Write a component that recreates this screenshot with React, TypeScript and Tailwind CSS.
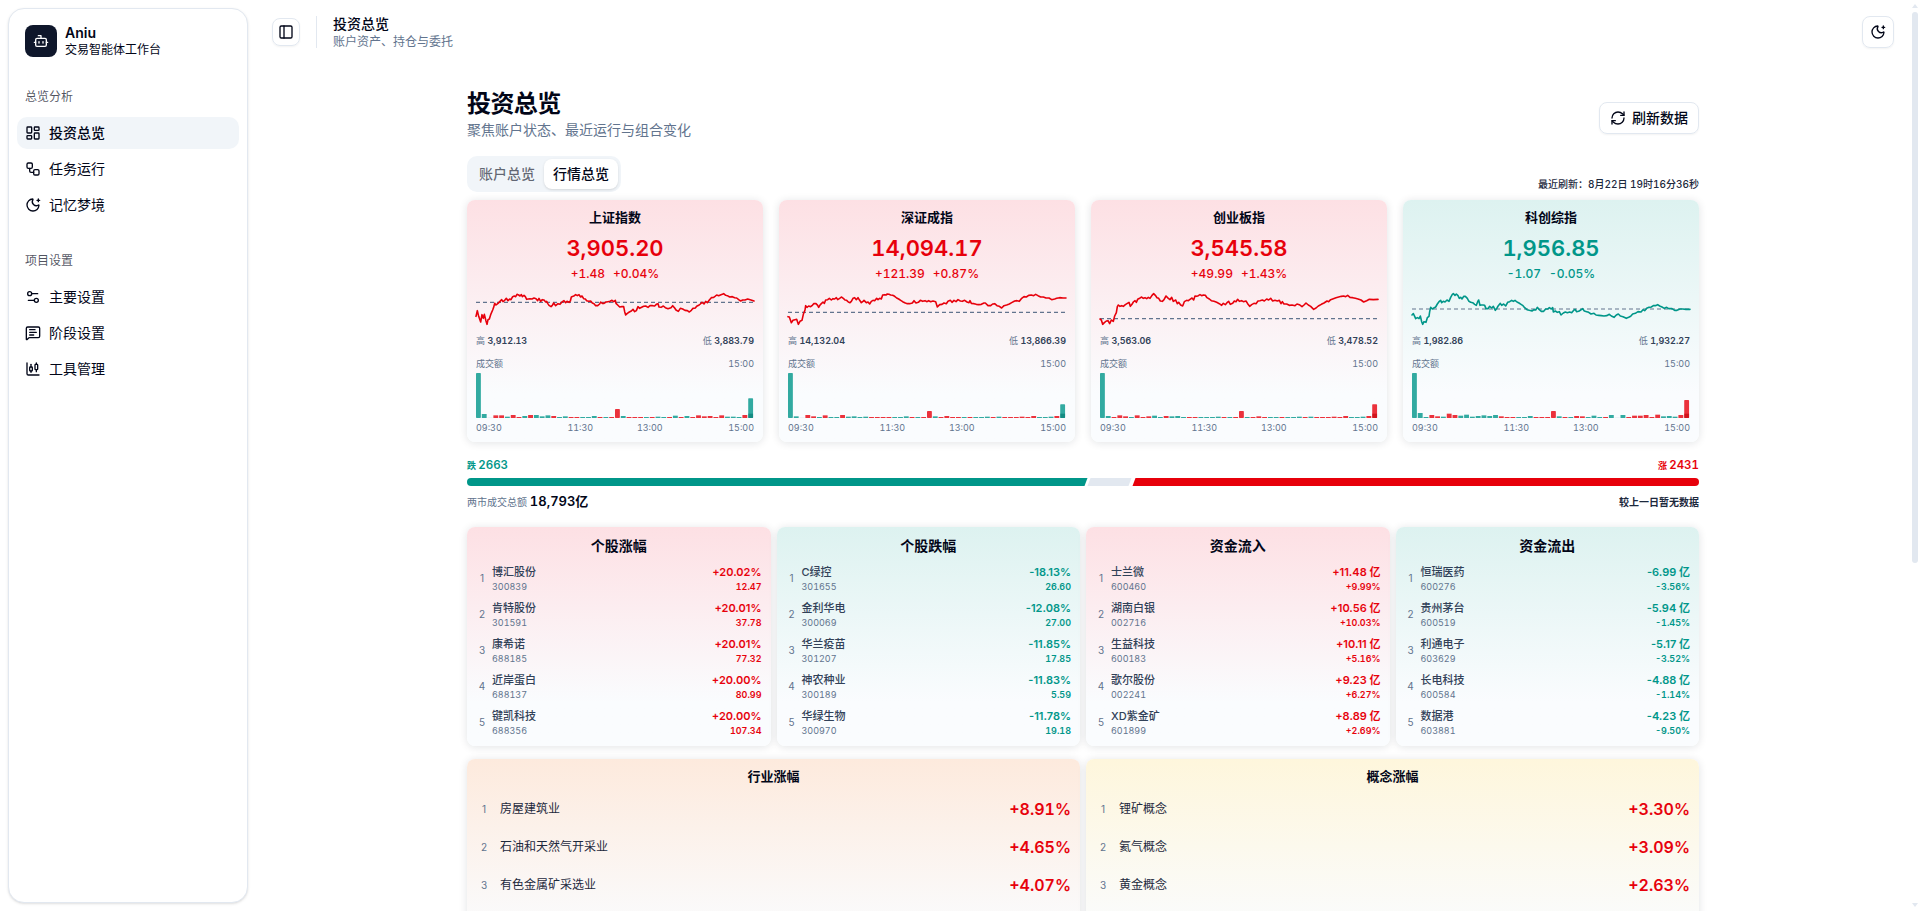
import React from "react";
import {
  Bot,
  ChartCandlestick,
  LayoutDashboard,
  MessageSquareText,
  MoonStar,
  PanelLeft,
  RefreshCw,
  Settings2,
  Workflow,
} from "lucide-react";
import type { LucideIcon } from "lucide-react";
import clsx from "clsx";

type Tone = "up" | "down";

interface IndexData {
  name: string;
  value: string;
  change: string;
  percent: string;
  tone: Tone;
  high: string;
  low: string;
  base: number;
  line: string;
  bars: string;
}

interface NavItem {
  label: string;
  icon: LucideIcon;
  active?: boolean;
}

const navGroups: { title: string; items: NavItem[] }[] = [
  {
    title: "总览分析",
    items: [
      { label: "投资总览", icon: LayoutDashboard, active: true },
      { label: "任务运行", icon: Workflow },
      { label: "记忆梦境", icon: MoonStar },
    ],
  },
  {
    title: "项目设置",
    items: [
      { label: "主要设置", icon: Settings2 },
      { label: "阶段设置", icon: MessageSquareText },
      { label: "工具管理", icon: ChartCandlestick },
    ],
  },
];

// line: intraday points on an 834 x 108 canvas
// bars: one entry per slot, g = falling, r = rising, followed by the height
const indices: IndexData[] = [
  {
    name: "上证指数",
    value: "3,905.20",
    change: "+1.48",
    percent: "+0.04%",
    tone: "up",
    high: "3,912.13",
    low: "3,883.79",
    base: 34,
    line: "0,76 4,59 8,76 14,93 18,71 22,82 25,70 30,90 33,100 36,86 40,84 44,71 50,57 53,49 56,37 60,42 66,37 72,31 77,26 81,32 86,28 91,22 96,29 101,24 105,26 110,17 115,15 119,17 123,10 128,12 132,15 136,11 139,17 144,13 148,17 152,25 157,24 162,23 168,24 174,21 180,23 185,29 189,22 194,31 199,26 204,27 209,33 212,31 215,37 219,43 225,47 229,43 233,36 239,44 246,38 252,40 258,33 264,29 269,35 273,31 279,34 283,30 286,18 291,16 295,14 299,11 304,14 309,11 314,18 318,15 323,23 328,24 332,29 338,31 344,30 349,36 354,38 359,44 365,44 371,39 374,33 379,37 384,37 390,33 396,32 402,31 408,28 413,32 418,28 420,37 425,42 431,48 438,47 443,47 446,62 449,72 454,67 460,63 466,60 471,55 476,62 481,59 486,47 491,52 497,49 503,46 509,45 516,49 522,44 530,44 536,45 541,40 546,38 549,48 555,49 562,45 568,50 576,53 585,50 590,44 596,51 600,57 607,61 613,52 620,54 627,58 634,59 640,63 646,58 651,52 658,51 662,46 668,43 673,39 678,34 684,39 689,31 694,35 700,27 706,20 713,19 717,16 722,12 728,14 735,11 743,8 749,13 754,14 761,18 769,17 776,20 782,21 788,26 794,30 800,27 807,27 815,24 825,27 834,30",
    bars: "g135 g12 n1 r8 r8 g4 r9 r3 g6 r9 g9 g5 g8 r6 g3 g5 r3 r3 g3 g3 g6 r3 g3 r3 r27 g6 r3 r3 r3 g3 r3 g4 g3 r3 g7 r3 g6 r3 r8 r5 r6 r3 r8 g4 g4 g3 r9 g59",
  },
  {
    name: "深证成指",
    value: "14,094.17",
    change: "+121.39",
    percent: "+0.87%",
    tone: "up",
    high: "14,132.04",
    low: "13,866.39",
    base: 64,
    line: "0,77 4,78 10,95 15,88 21,86 26,85 31,100 36,91 42,88 46,70 51,57 53,44 57,49 62,45 68,47 72,44 77,38 84,38 89,43 92,49 97,41 101,37 105,33 109,37 113,27 119,26 124,22 130,27 135,23 140,24 145,20 149,26 155,22 160,18 166,22 171,27 176,28 181,33 186,35 190,31 195,22 200,20 205,26 210,20 215,28 220,35 225,31 228,28 235,35 240,33 245,39 250,31 255,28 260,29 266,22 270,26 275,22 280,24 284,12 290,11 294,12 298,9 303,10 308,12 314,13 320,16 326,21 332,24 338,28 344,32 352,36 358,38 365,38 373,36 378,29 384,36 391,34 397,28 404,31 411,29 416,32 422,29 428,32 435,30 443,32 448,48 455,41 462,40 468,36 475,38 480,31 487,28 492,34 498,28 504,32 510,26 517,30 523,31 530,28 537,33 543,35 546,29 550,37 558,38 565,40 572,41 580,40 588,36 592,36 600,44 608,44 614,39 620,38 627,44 634,46 641,51 648,44 656,42 664,39 671,35 680,30 687,29 694,31 700,23 708,17 715,18 722,13 730,12 737,14 743,10 750,14 758,18 766,18 774,21 783,21 791,26 800,24 806,22 815,20 825,21 834,21",
    bars: "g135 g5 n1 r9 r5 g3 r8 g3 g3 r9 g4 g5 g3 g4 r3 r3 r3 r3 g3 g3 g5 r3 g3 r3 r21 g5 r3 r6 r3 r3 g3 r3 g3 g3 g4 r3 g4 r3 r3 r3 r4 r3 r6 g3 g3 g4 r6 g41",
  },
  {
    name: "创业板指",
    value: "3,545.58",
    change: "+49.99",
    percent: "+1.43%",
    tone: "up",
    high: "3,563.06",
    low: "3,478.52",
    base: 83,
    line: "0,84 4,87 8,100 13,95 19,90 24,89 29,98 34,87 40,91 44,75 49,65 52,47 55,42 60,46 65,44 70,46 76,41 82,37 87,34 91,46 96,40 100,33 105,29 109,34 113,25 119,22 124,18 130,22 135,20 140,23 145,19 150,22 156,13 161,8 166,13 171,20 176,22 181,30 187,31 192,26 198,15 205,22 210,26 215,19 220,31 227,27 232,38 236,34 242,42 248,45 253,32 260,28 265,29 270,25 276,21 281,27 285,15 290,16 295,14 300,11 305,14 310,12 316,13 321,20 328,24 334,29 342,31 350,34 358,38 365,43 370,37 376,41 381,35 386,31 391,40 398,37 403,30 408,32 413,25 418,31 425,29 430,32 438,30 443,38 449,46 455,41 462,37 468,38 474,30 480,29 487,27 493,30 500,24 506,27 512,22 518,30 525,28 532,30 538,28 543,38 547,32 552,39 560,39 568,43 576,42 585,44 591,39 598,41 606,47 612,42 618,36 625,42 632,46 641,55 648,51 655,45 664,40 672,36 681,30 686,32 692,26 700,23 708,20 716,18 724,16 731,15 737,17 743,13 750,19 758,20 766,22 774,24 783,27 791,33 800,29 808,25 820,26 834,25",
    bars: "g135 g6 r3 r8 r5 g3 r8 r3 r5 g7 g3 r6 g5 g6 g3 r3 r3 g3 g3 g3 g4 r3 g3 r3 r21 g3 r3 r5 r3 g3 g3 r3 g3 g3 g4 r3 g4 r3 r3 r3 r4 r3 r6 g3 g3 g4 r6 r41",
  },
  {
    name: "科创综指",
    value: "1,956.85",
    change: "-1.07",
    percent: "-0.05%",
    tone: "down",
    high: "1,982.86",
    low: "1,932.27",
    base: 54,
    line: "0,72 4,68 8,76 11,83 16,80 21,83 25,75 29,92 32,100 36,92 42,94 46,80 51,76 53,62 56,49 61,54 67,50 71,48 76,39 81,32 86,28 89,35 94,31 99,33 105,27 111,31 116,19 121,10 124,8 129,13 133,9 138,14 142,22 146,19 150,24 155,16 160,16 166,22 170,30 176,34 182,35 188,40 193,43 197,32 200,27 204,43 208,42 213,42 218,43 222,53 228,53 233,46 239,51 244,46 250,58 255,51 259,44 265,37 269,43 275,39 281,45 287,34 293,32 299,28 304,31 309,28 315,33 321,36 327,40 333,44 338,50 345,56 352,58 360,60 366,56 371,57 376,49 382,56 388,61 395,61 401,54 407,54 412,50 418,54 422,50 424,63 430,60 436,64 442,62 447,72 454,66 460,63 466,65 473,63 479,65 484,59 489,55 494,62 500,61 506,57 512,53 517,60 524,62 530,64 537,69 546,67 552,72 560,73 568,74 576,75 584,74 592,70 598,75 606,79 613,72 619,69 625,75 633,77 643,82 650,79 656,76 662,69 670,67 678,62 687,63 693,56 698,59 704,52 711,49 718,48 724,44 730,44 737,41 743,45 750,48 757,52 764,49 770,53 780,53 788,58 795,58 804,54 812,54 822,55 834,55",
    bars: "g135 g15 g3 r9 r5 g4 r13 r9 g7 g10 g4 g6 g8 g6 g9 r5 r3 r3 g3 g3 g6 r3 r3 r3 r21 g5 r3 g3 r6 r5 g3 g7 g3 r3 g9 n1 g9 r3 r7 r7 r9 r3 r10 g5 g6 g4 r9 r54",
  },
];

const rankings: { title: string; tone: Tone; rows: string[][] }[] = [
  {
    title: "个股涨幅",
    tone: "up",
    rows: [
      ["博汇股份", "300839", "+20.02%", "12.47"],
      ["肯特股份", "301591", "+20.01%", "37.78"],
      ["康希诺", "688185", "+20.01%", "77.32"],
      ["近岸蛋白", "688137", "+20.00%", "80.99"],
      ["键凯科技", "688356", "+20.00%", "107.34"],
    ],
  },
  {
    title: "个股跌幅",
    tone: "down",
    rows: [
      ["C绿控", "301655", "-18.13%", "26.60"],
      ["金利华电", "300069", "-12.08%", "27.00"],
      ["华兰疫苗", "301207", "-11.85%", "17.85"],
      ["神农种业", "300189", "-11.83%", "5.59"],
      ["华绿生物", "300970", "-11.78%", "19.18"],
    ],
  },
  {
    title: "资金流入",
    tone: "up",
    rows: [
      ["士兰微", "600460", "+11.48 亿", "+9.99%"],
      ["湖南白银", "002716", "+10.56 亿", "+10.03%"],
      ["生益科技", "600183", "+10.11 亿", "+5.16%"],
      ["歌尔股份", "002241", "+9.23 亿", "+6.27%"],
      ["XD紫金矿", "601899", "+8.89 亿", "+2.69%"],
    ],
  },
  {
    title: "资金流出",
    tone: "down",
    rows: [
      ["恒瑞医药", "600276", "-6.99 亿", "-3.56%"],
      ["贵州茅台", "600519", "-5.94 亿", "-1.45%"],
      ["利通电子", "603629", "-5.17 亿", "-3.52%"],
      ["长电科技", "600584", "-4.88 亿", "-1.14%"],
      ["数据港", "603881", "-4.23 亿", "-9.50%"],
    ],
  },
];

const sectors = [
  {
    title: "行业涨幅",
    bg: "from-[#fdeadd]",
    rows: [
      ["房屋建筑业", "+8.91%"],
      ["石油和天然气开采业", "+4.65%"],
      ["有色金属矿采选业", "+4.07%"],
    ],
  },
  {
    title: "概念涨幅",
    bg: "from-[#fef6dc]",
    rows: [
      ["锂矿概念", "+3.30%"],
      ["氦气概念", "+3.09%"],
      ["黄金概念", "+2.63%"],
    ],
  },
];

const toneText = (tone: Tone) =>
  tone === "up" ? "text-red-600" : "text-teal-600";
const toneBg = (tone: Tone) =>
  tone === "up" ? "from-[#fde0e4]" : "from-[#ddf2f0]";

const cardClass =
  "rounded-lg bg-linear-to-b to-[#fafcfe] to-80% shadow-[0_1px_8px_rgba(15,23,42,0.12)]";

const Sidebar: React.FC = () => (
  <aside className="w-[248px] shrink-0 p-2 pr-0">
    <div className="h-full rounded-2xl border border-slate-200 bg-white shadow-sm">
      <div className="flex h-16 items-center gap-2 px-4">
        <div className="flex size-8 items-center justify-center rounded-lg bg-slate-900 text-white">
          <Bot className="size-4" />
        </div>
        <div className="flex flex-col">
          <span className="text-sm leading-[17.5px] font-semibold">Aniu</span>
          <span className="text-xs">交易智能体工作台</span>
        </div>
      </div>
      <div className="flex flex-col gap-2">
        {navGroups.map((group) => (
          <div key={group.title} className="p-2">
            <div className="flex h-8 items-center px-2 text-xs text-slate-950/70">
              {group.title}
            </div>
            <nav className="mt-1 flex flex-col gap-1">
              {group.items.map(({ label, icon: Icon, active }) => (
                <a
                  key={label}
                  className={clsx(
                    "flex h-8 items-center gap-2 rounded-[10px] px-2 text-sm",
                    active && "bg-slate-100 font-medium",
                  )}
                >
                  <Icon className="size-4" />
                  {label}
                </a>
              ))}
            </nav>
          </div>
        ))}
      </div>
    </div>
  </aside>
);

const Header: React.FC = () => (
  <header className="flex h-16 items-center pr-[18px] pl-6">
    <button className="flex size-7 items-center justify-center rounded-lg border border-slate-200 shadow-xs">
      <PanelLeft className="size-4" />
    </button>
    <div className="ml-4 h-8 w-px bg-slate-200" />
    <div className="ml-4 flex flex-col pt-0.5">
      <span className="text-sm leading-[17px] font-medium">投资总览</span>
      <span className="text-xs leading-[19px] text-slate-500">
        账户资产、持仓与委托
      </span>
    </div>
    <button className="ml-auto flex size-8 items-center justify-center rounded-lg border border-slate-200 shadow-xs">
      <MoonStar className="size-4" />
    </button>
  </header>
);

const Sparkline: React.FC<{ data: IndexData }> = ({ data }) => (
  <svg
    viewBox="0 0 834 108"
    className={clsx(
      "mt-[9px] h-9 w-full overflow-visible",
      toneText(data.tone),
    )}
    preserveAspectRatio="none"
    fill="none"
  >
    <line
      x1="0"
      x2="834"
      y1={data.base}
      y2={data.base}
      className="stroke-slate-500"
      strokeWidth="1.1"
      strokeDasharray="4 3"
      vectorEffect="non-scaling-stroke"
    />
    <polyline
      points={data.line}
      stroke="currentColor"
      strokeWidth="1.6"
      strokeLinejoin="round"
      strokeLinecap="round"
      vectorEffect="non-scaling-stroke"
    />
  </svg>
);

const VolumeBars: React.FC<{ bars: string }> = ({ bars }) => {
  const list = bars.split(" ");
  const step = 834 / list.length;
  const last = list[list.length - 1];
  return (
    <svg
      viewBox="0 0 834 135"
      className="mt-[2px] h-[45px] w-full"
      preserveAspectRatio="none"
    >
      {list.map((bar, i) => {
        const h = Number(bar.slice(1));
        return (
          <rect
            key={i}
            x={i * step}
            y={135 - h}
            width={step * 0.84}
            height={h}
            rx={h > 20 ? 2 : 0}
            opacity={0.8}
            className={
              bar[0] === "g"
                ? "fill-teal-600"
                : bar[0] === "r"
                  ? "fill-red-600"
                  : "fill-slate-300"
            }
          />
        );
      })}
      <rect
        x={47 * step}
        y={122}
        width={step * 0.84}
        height={13}
        opacity={0.6}
        className={last[0] === "g" ? "fill-teal-700" : "fill-red-700"}
      />
    </svg>
  );
};

const IndexCard: React.FC<{ data: IndexData }> = ({ data }) => (
  <div className={clsx(cardClass, toneBg(data.tone), "h-[242px] px-[9px] py-2")}>
    <div className="text-center text-[13px] leading-[18px] font-semibold">
      {data.name}
    </div>
    <div
      className={clsx(
        "mt-2 text-center text-[22px] leading-7 font-semibold tabular-nums",
        toneText(data.tone),
      )}
    >
      {data.value}
    </div>
    <div
      className={clsx(
        "mt-1 flex justify-center gap-2 text-xs font-medium tabular-nums",
        toneText(data.tone),
      )}
    >
      <span>{data.change}</span>
      <span>{data.percent}</span>
    </div>
    <Sparkline data={data} />
    <div className="mt-[7px] flex h-[14px] justify-between text-[9px] leading-[14px] text-slate-500 tabular-nums">
      <span>
        高 <b className="font-semibold text-slate-700">{data.high}</b>
      </span>
      <span>
        低 <b className="font-semibold text-slate-700">{data.low}</b>
      </span>
    </div>
    <div className="mt-[9px] flex justify-between text-[9px] leading-[14px] text-slate-500 tabular-nums">
      <span>成交额</span>
      <span>15:00</span>
    </div>
    <VolumeBars bars={data.bars} />
    <div className="mt-[3px] flex text-[9px] leading-[14px] text-slate-500 tabular-nums">
      <span>09:30</span>
      <span className="flex-[3]" />
      <span>11:30</span>
      <span className="flex-[2]" />
      <span>13:00</span>
      <span className="flex-[3]" />
      <span>15:00</span>
    </div>
  </div>
);

const MarketBreadth: React.FC = () => (
  <div className="mt-4">
    <div className="flex h-4 justify-between text-[9px] leading-4 font-semibold">
      <span className="text-teal-600">
        跌 <span className="text-[11.5px] leading-none tabular-nums">2663</span>
      </span>
      <span className="text-red-600">
        涨 <span className="text-[11.5px] leading-none tabular-nums">2431</span>
      </span>
    </div>
    <svg viewBox="0 0 1232 8" className="mt-[3.5px] block h-2 w-full">
      <path
        d="M4 0H620.5L617.5 8H4A4 4 0 0 1 4 0Z"
        className="fill-teal-600"
      />
      <path d="M623.5 0H664.5L661.5 8H620.5Z" className="fill-slate-200" />
      <path
        d="M668.5 0H1228A4 4 0 0 1 1228 8H665.5Z"
        className="fill-red-600"
      />
    </svg>
    <div className="mt-[6.5px] flex h-5 items-center justify-between text-[10px] leading-5">
      <span className="text-slate-500">
        两市成交总额{" "}
        <span className="text-[13px] leading-none font-semibold text-slate-950 tabular-nums">
          18,793亿
        </span>
      </span>
      <span className="font-semibold text-slate-800">较上一日暂无数据</span>
    </div>
  </div>
);

const App: React.FC = () => {
  return (
    <div className="flex h-screen overflow-hidden bg-white font-[Inter,'Noto_Sans_CJK_SC',sans-serif] text-slate-950">
      <Sidebar />
      <div className="min-w-0 flex-1 overflow-hidden">
        <Header />
        <main className="ml-[219px] w-[1232px] pt-6">
          <div className="flex h-[52px] items-end justify-between">
            <div>
              <h1 className="text-2xl leading-8 font-semibold tracking-tight">
                投资总览
              </h1>
              <p className="text-sm leading-5 text-slate-500">
                聚焦账户状态、最近运行与组合变化
              </p>
            </div>
            <button className="mb-[6px] flex h-8 items-center gap-1.5 rounded-lg border border-slate-200 px-2.5 text-sm font-medium shadow-xs">
              <RefreshCw className="size-4" />
              刷新数据
            </button>
          </div>

          <div className="mt-4 flex items-end justify-between">
            <div className="flex h-9 rounded-[10px] bg-slate-100 p-[3px] text-sm font-medium">
              <button className="px-[9px] text-slate-950/60">账户总览</button>
              <button className="rounded-lg bg-white px-[9px] shadow-sm">
                行情总览
              </button>
            </div>
            <span className="text-[10px] leading-4 font-medium text-slate-800 tabular-nums">
              最近刷新：8月22日 19时16分36秒
            </span>
          </div>

          <div className="mt-2 grid grid-cols-4 gap-4">
            {indices.map((item) => (
              <IndexCard key={item.name} data={item} />
            ))}
          </div>

          <MarketBreadth />

          <div className="mt-[15px] grid grid-cols-4 gap-1.5">
            {rankings.map((board) => (
              <div
                key={board.title}
                className={clsx(
                  cardClass,
                  toneBg(board.tone),
                  "h-[219px] px-[9px] pt-[9px]",
                )}
              >
                <h3 className="text-center text-sm leading-5 font-semibold">
                  {board.title}
                </h3>
                <ul className="mt-[5px]">
                  {board.rows.map((row, i) => (
                    <li key={row[1]} className="flex h-9 items-center">
                      <span className="w-3 pb-px text-center text-[10px] text-slate-500">
                        {i + 1}
                      </span>
                      <div className="ml-1 flex-1">
                        <div className="text-[11px] leading-[15px] font-medium text-slate-700">
                          {row[0]}
                        </div>
                        <div className="text-[9px] leading-[13px] text-slate-500 tabular-nums">
                          {row[1]}
                        </div>
                      </div>
                      <div
                        className={clsx(
                          "text-right font-semibold",
                          toneText(board.tone),
                        )}
                      >
                        <div className="text-[11px] leading-[15px]">
                          {row[2]}
                        </div>
                        <div className="text-[9px] leading-[13px] tabular-nums">
                          {row[3]}
                        </div>
                      </div>
                    </li>
                  ))}
                </ul>
              </div>
            ))}
          </div>

          <div className="mt-[13px] grid grid-cols-2 gap-1.5">
            {sectors.map((board) => (
              <div
                key={board.title}
                className={clsx(
                  cardClass,
                  board.bg,
                  "h-[220px] px-[9px] pt-[7px]",
                )}
              >
                <h3 className="text-center text-[13px] leading-5 font-semibold">
                  {board.title}
                </h3>
                <ul className="mt-1">
                  {board.rows.map((row, i) => (
                    <li key={row[0]} className="flex h-[38px] items-center">
                      <span className="w-4 text-center text-[10px] text-slate-500">
                        {i + 1}
                      </span>
                      <span className="ml-2 text-xs text-slate-800">
                        {row[0]}
                      </span>
                      <span className="ml-auto text-base font-semibold text-red-600 tabular-nums">
                        {row[1]}
                      </span>
                    </li>
                  ))}
                </ul>
              </div>
            ))}
          </div>
        </main>
      </div>
      {/* scroll track */}
      <div className="flex w-2 flex-col justify-between py-1">
        <div className="flex flex-col gap-1">
          <svg viewBox="0 0 6 4" className="h-1 w-1.5 fill-slate-200">
            <path d="M3 0L6 4H0Z" />
          </svg>
          <div className="h-[551px] w-1.5 rounded-full bg-slate-200" />
        </div>
        <svg viewBox="0 0 6 4" className="h-1 w-1.5 fill-slate-200">
          <path d="M0 0H6L3 4Z" />
        </svg>
      </div>
    </div>
  );
};

export default App;
